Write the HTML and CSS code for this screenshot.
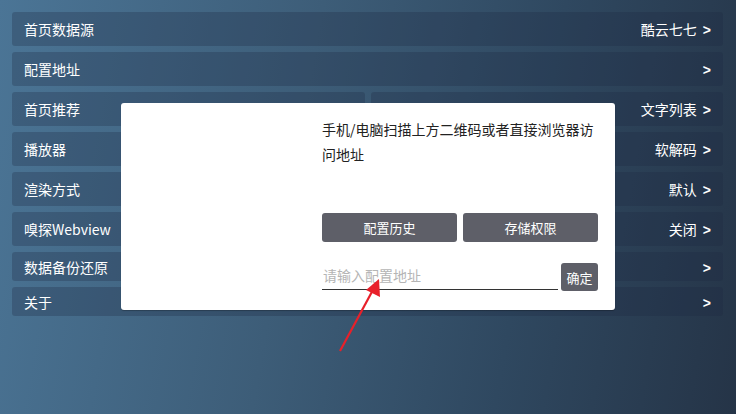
FILE: index.html
```html
<!DOCTYPE html>
<html lang="zh-CN">
<head>
  <meta charset="UTF-8">
  <meta name="viewport" content="width=device-width, initial-scale=1.0">
  <title>设置</title>
  <link rel="stylesheet" href="styles.css">
</head>
<body>
  <div class="settings">
    <div class="row"><span>首页数据源</span><span class="value">酷云七七<i class="chev">&gt;</i></span></div>
    <div class="row"><span>配置地址</span><span class="value"><i class="chev">&gt;</i></span></div>
    <div class="split">
      <div class="row"><span>首页推荐</span><span class="value">线路切换</span></div>
      <div class="row"><span>搜索展示</span><span class="value">文字列表<i class="chev">&gt;</i></span></div>
    </div>
    <div class="row"><span>播放器</span><span class="value">软解码<i class="chev">&gt;</i></span></div>
    <div class="row"><span>渲染方式</span><span class="value">默认<i class="chev">&gt;</i></span></div>
    <div class="row"><span>嗅探Webview</span><span class="value">关闭<i class="chev">&gt;</i></span></div>
    <div class="row small"><span>数据备份还原</span><span class="value"><i class="chev">&gt;</i></span></div>
    <div class="row small"><span>关于</span><span class="value"><i class="chev">&gt;</i></span></div>
  </div>

  <!-- config address dialog -->
  <div class="dialog">
    <div class="qr-area"></div>
    <div class="dialog-body">
      <p class="hint">手机/电脑扫描上方二维码或者直接浏览器访问地址</p>
      <div class="btn-row">
        <button class="btn">配置历史</button>
        <button class="btn">存储权限</button>
      </div>
      <div class="input-row">
        <input type="text" class="url-input" placeholder="请输入配置地址">
        <button class="btn ok">确定</button>
      </div>
    </div>
  </div>

  <svg class="arrow" width="60" height="90" viewBox="0 0 60 90">
    <line x1="8" y1="80" x2="42" y2="17" stroke="#e8202a" stroke-width="2.2"/>
    <polygon points="47,8 48,26 34,19" fill="#e8202a"/>
  </svg>
</body>
</html>
```

FILE: styles.css
```css
body {
  margin: 0;
  width: 736px;
  height: 414px;
  overflow: hidden;
  font-family: "Noto Sans CJK SC", "Noto Sans", sans-serif;
  color: white;
  background: linear-gradient(100deg, #4b7596 0%, #3d5d78 40%, #2f4860 70%, #253447 100%);
  position: relative;
}

.settings {
  padding: 12px 13px 0 12px;
  display: flex;
  flex-direction: column;
  gap: 6px;
}

.row {
  display: flex;
  justify-content: space-between;
  align-items: center;
  height: 34px;
  padding: 0 12px;
  border-radius: 3px;
  background: rgba(28, 40, 66, 0.28);
  font-size: 14px;
  box-sizing: border-box;
}

.row.small {
  height: 29px;
}

.split {
  display: flex;
  gap: 6px;
}

.split .row {
  flex: 1;
}

.value {
  font-size: 14px;
}

.chev {
  font-style: normal;
  font-weight: bold;
  font-family: "Liberation Sans", Arial, sans-serif;
  font-size: 14px;
  margin-left: 6px;
}

/* Dialog */
.dialog {
  position: absolute;
  left: 121px;
  top: 103px;
  width: 494px;
  height: 207px;
  background: white;
  border-radius: 3px;
  box-shadow: 0 1px 1px rgba(0, 0, 0, 0.25);
  display: flex;
  color: #222;
}

.qr-area {
  width: 201px;
}

.dialog-body {
  width: 276px;
  padding-top: 14px;
}

.hint {
  margin: 0;
  font-size: 14px;
  line-height: 25px;
  height: 96px;
}

.btn-row {
  display: flex;
  gap: 6px;
}

.btn {
  flex: 1;
  height: 29px;
  border: none;
  border-radius: 3px;
  background: #5e5f68;
  color: white;
  font-family: "Noto Sans CJK SC", sans-serif;
  font-size: 13px;
}

.input-row {
  display: flex;
  align-items: flex-end;
  gap: 3px;
  margin-top: 21px;
}

.url-input {
  flex: 1;
  min-width: 0;
  height: 24px;
  border: none;
  border-bottom: 1.5px solid #333;
  padding: 0 1px 2px;
  font-family: "Noto Sans CJK SC", sans-serif;
  font-size: 14px;
  outline: none;
  margin-bottom: 1px;
}

.url-input::placeholder {
  color: #b5b5b5;
}

.btn.ok {
  flex: none;
  width: 37px;
  height: 28px;
  padding: 0;
  font-size: 13px;
}

.arrow {
  position: absolute;
  left: 332px;
  top: 271px;
}
```
